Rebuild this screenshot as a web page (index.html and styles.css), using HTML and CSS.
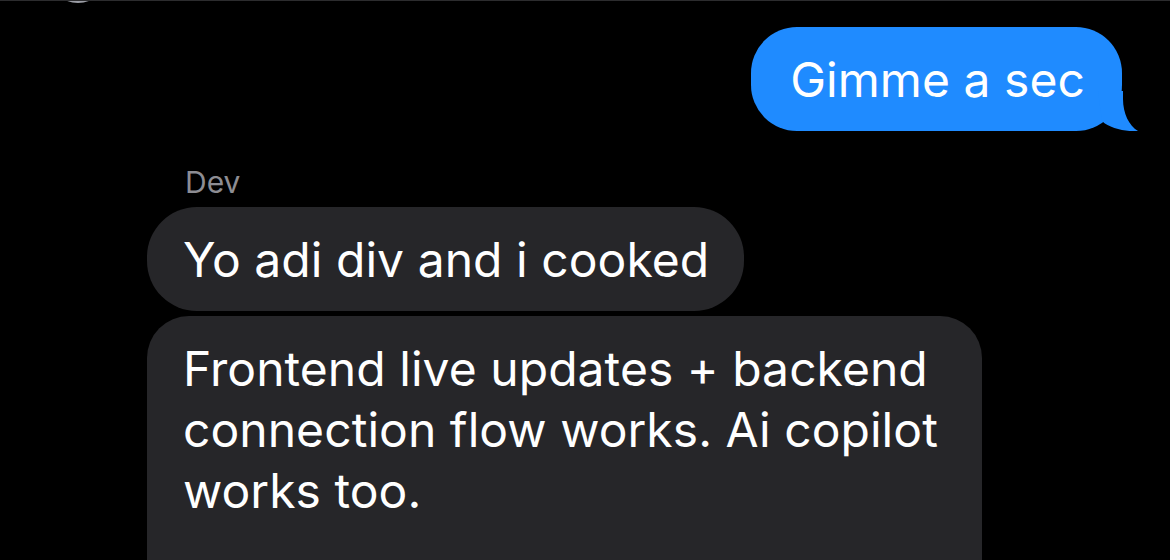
FILE: index.html
```html
<!DOCTYPE html>
<html lang="en">
<head>
<meta charset="utf-8">
<title>Messages</title>
<link rel="stylesheet" href="styles.css">
</head>
<body>
<div class="screen">
  <div class="topbar"><div class="avatar"></div></div>
  <div class="thread">
    <div class="row sent">
      <div class="bubble blue">Gimme a sec<svg class="tail" width="40" height="40" viewBox="0 0 40 40"><path d="M0 0 H25 V8 C25 22 31 35 40 40 C30 41 12 38 4 30 Z" fill="#1f8bff"/></svg></div>
    </div>
    <div class="sender">Dev</div>
    <div class="row received">
      <div class="bubble gray">Yo adi div and i cooked</div>
    </div>
    <div class="row received">
      <div class="bubble gray wide">Frontend live updates + backend<br>connection flow works. Ai copilot<br>works too.</div>
    </div>
  </div>
</div>
</body>
</html>
```

FILE: styles.css
```css
html, body {
  margin: 0;
  padding: 0;
  background: #000;
}
.screen {
  width: 1170px;
  height: 560px;
  overflow: hidden;
  background: #000;
  font-family: "Inter", "Liberation Sans", sans-serif;
  color: #fff;
  border-top: 1px solid #2c2c2e;
  box-sizing: border-box;
}
.topbar {
  height: 3px;
  overflow: hidden;
  padding-left: 48px;
}
.avatar {
  width: 60px;
  height: 60px;
  margin-top: -58px;
  border-radius: 50%;
  background: #9b9da5;
}
.thread {
  display: flex;
  flex-direction: column;
  padding-top: 23px;
}
.row {
  display: flex;
}
.sent {
  justify-content: flex-end;
  padding-right: 48px;
}
.received {
  padding-left: 147px;
  margin-bottom: 5px;
}
.bubble {
  position: relative;
  font-size: 48px;
  line-height: 61px;
  padding: 22px 37px 21px 37px;
  border-radius: 48px;
  letter-spacing: 0.05px;
}
.blue {
  background: #1f8bff;
  border-radius: 46px;
  padding-left: 39px;
}
.tail {
  position: absolute;
  right: -16px;
  bottom: 0;
  display: block;
}
.gray {
  background: #262629;
  border-radius: 50px;
  padding-left: 36px;
  padding-right: 35px;
}
.wide {
  width: 835px;
  box-sizing: border-box;
  border-radius: 42px;
  padding-bottom: 80px;
}
.sender {
  font-size: 30px;
  line-height: 36px;
  color: #8d8d93;
  padding-left: 185px;
  margin-top: 33px;
  margin-bottom: 7px;
}
```
